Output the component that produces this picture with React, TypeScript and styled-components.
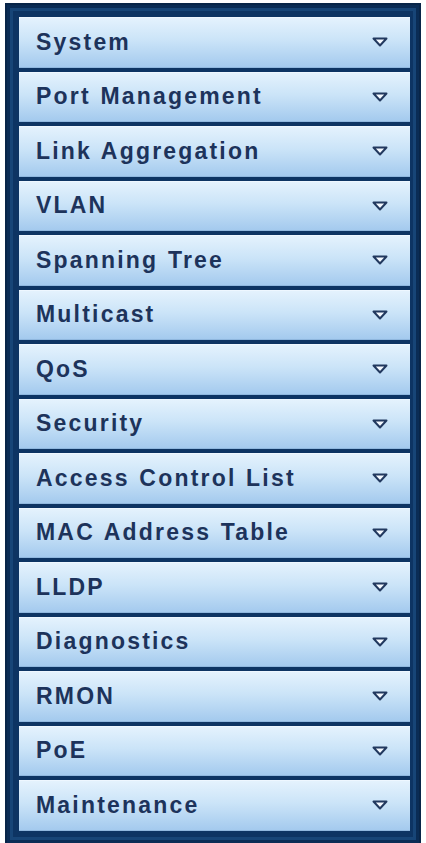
import React from "react"
import styled, { createGlobalStyle } from "styled-components"

const items = [
  "System",
  "Port Management",
  "Link Aggregation",
  "VLAN",
  "Spanning Tree",
  "Multicast",
  "QoS",
  "Security",
  "Access Control List",
  "MAC Address Table",
  "LLDP",
  "Diagnostics",
  "RMON",
  "PoE",
  "Maintenance",
]

const Global = createGlobalStyle`
  body {
    margin: 0;
    background: #ffffff;
    font-family: "Liberation Sans", Arial, sans-serif;
  }
`

const Frame = styled.div`
  margin: 3px 0 0 5px;
  width: 416px;
  box-sizing: border-box;
  padding: 12px 9px 12px 12px;
  display: flex;
  flex-direction: column;
  gap: 4px;
  background: #0d3463;
  border: 2px solid #082548;
  box-shadow: inset 0 0 0 3px #0a2c55, inset 0 0 0 6px #174577;
`

const Item = styled.div`
  height: 50.5px;
  box-sizing: border-box;
  display: flex;
  align-items: center;
  justify-content: space-between;
  padding: 0 22px 0 17px;
  background: linear-gradient(to bottom, #e4f2fd 0%, #cbe4f8 45%, #a4caee 100%);
  border-top: 1px solid #eef7ff;
  border-bottom: 1px solid #8fb7de;
`

const Label = styled.span`
  font-size: 23px;
  font-weight: bold;
  color: #1d335b;
  letter-spacing: 2.2px;
  word-spacing: 1px;
`

const Arrow = () => (
  <svg width="16" height="10" viewBox="0 0 16 10">
    <path d="M1.5 1.5 H14.5 L8 8.5 Z" fill="#f4f9ff" stroke="#22395f" strokeWidth="2" strokeLinejoin="round" />
  </svg>
)

const App = () => {
  return (
    <>
      <Global />
      <Frame>
        {items.map((t) => (
          <Item key={t}>
            <Label>{t}</Label>
            <Arrow />
          </Item>
        ))}
      </Frame>
    </>
  )
}

export default App
